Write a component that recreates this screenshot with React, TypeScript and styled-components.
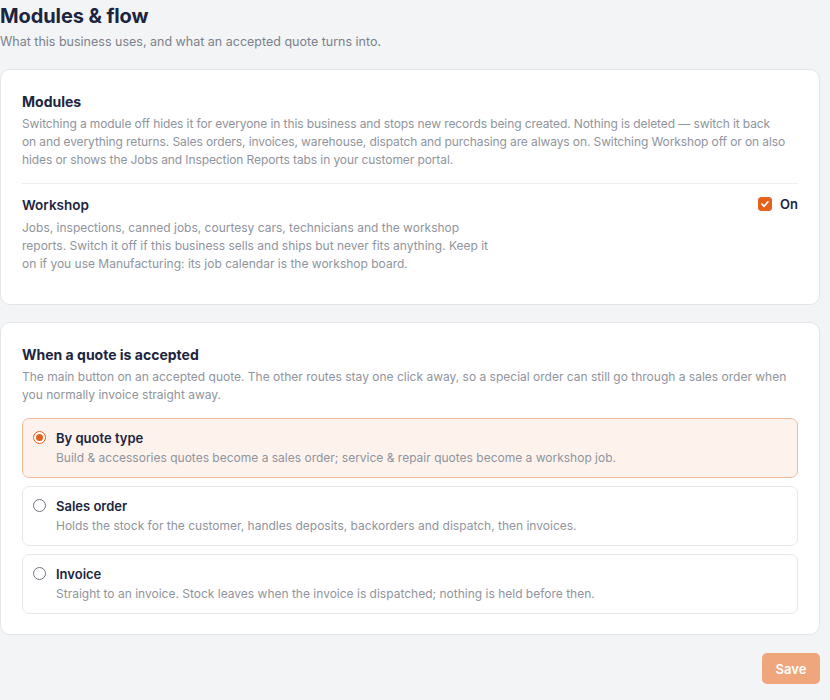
import styled, { createGlobalStyle } from 'styled-components';
import { useState } from 'react';

const GlobalStyle = createGlobalStyle`
  html, body {
    margin: 0;
    padding: 0;
    background: #f3f4f6;
  }
  body {
    font-family: Inter, "Noto Sans", sans-serif;
    color: #1b2540;
  }
  * { box-sizing: border-box; }
`;

const Page = styled.div`
  width: 820px;
  padding-bottom: 17px;
`;

const Title = styled.h1`
  margin: 0;
  padding-top: 3px;
  font-size: 20px;
  line-height: 26px;
  font-weight: 700;
  color: #1b2540;
  letter-spacing: -0.1px;
`;

const Subtitle = styled.p`
  margin: 4px 0 0;
  font-size: 12.5px;
  line-height: 18px;
  color: #7c818b;
`;

const Card = styled.section<{ $top: number }>`
  margin-top: ${(p) => p.$top}px;
  background: #ffffff;
  border: 1px solid #e3e5e9;
  border-radius: 10px;
  padding: 22px 21px 20px;
`;

const SectionTitle = styled.h2`
  margin: 0;
  font-size: 14px;
  line-height: 20px;
  font-weight: 700;
  color: #1b2540;
`;

const Muted = styled.p<{ $max?: number; $gap?: number; $tight?: boolean }>`
  margin: ${(p) => p.$gap ?? 3}px 0 0;
  font-size: 12px;
  line-height: 18px;
  letter-spacing: ${(p) => (p.$tight ? '-0.1px' : '0')};
  color: #8f949d;
  max-width: ${(p) => (p.$max ? `${p.$max}px` : 'none')};
`;

const Divider = styled.hr`
  border: 0;
  border-top: 1px solid #eceef1;
  margin: 14px 0 11px;
`;

const ModuleRow = styled.div`
  display: flex;
  justify-content: space-between;
  align-items: flex-start;
  padding-bottom: 11px;
`;

const ModuleName = styled.div`
  font-size: 13.5px;
  line-height: 20px;
  font-weight: 600;
  color: #1b2540;
`;

const Toggle = styled.label`
  display: flex;
  align-items: center;
  gap: 8px;
  margin-top: 1px;
  font-size: 13px;
  font-weight: 600;
  color: #1b2540;
  cursor: pointer;
`;

const Check = styled.span<{ $on: boolean }>`
  width: 14px;
  height: 14px;
  border-radius: 3px;
  background: ${(p) => (p.$on ? '#e3621d' : '#fff')};
  border: 1px solid ${(p) => (p.$on ? '#e3621d' : '#9aa0a8')};
  display: flex;
  align-items: center;
  justify-content: center;
`;

const Options = styled.div`
  display: flex;
  flex-direction: column;
  gap: 8px;
  margin-top: 14px;
`;

const Option = styled.label<{ $active: boolean }>`
  display: flex;
  gap: 10px;
  padding: 10px;
  border-radius: 7px;
  border: 1px solid ${(p) => (p.$active ? '#f2bc9c' : '#e6e8eb')};
  background: ${(p) => (p.$active ? '#fdf2ec' : '#ffffff')};
  cursor: pointer;
`;

const Radio = styled.span<{ $on: boolean }>`
  flex: none;
  width: 13px;
  height: 13px;
  margin-top: 2px;
  border-radius: 50%;
  border: 1px solid ${(p) => (p.$on ? '#e3621d' : '#707680')};
  background: #fff;
  display: flex;
  align-items: center;
  justify-content: center;
  &::after {
    content: '';
    width: 7px;
    height: 7px;
    border-radius: 50%;
    background: ${(p) => (p.$on ? '#e3621d' : 'transparent')};
  }
`;

const OptionText = styled.div`
  display: flex;
  flex-direction: column;
`;

const OptionTitle = styled.div`
  font-size: 13px;
  line-height: 18px;
  font-weight: 600;
  color: #1b2540;
`;

const OptionDesc = styled.div`
  margin-top: 2px;
  font-size: 12px;
  line-height: 18px;
  color: #8f949d;
`;

const Footer = styled.div`
  display: flex;
  justify-content: flex-end;
  margin-top: 18px;
`;

const SaveButton = styled.button`
  font-family: inherit;
  font-size: 13px;
  font-weight: 600;
  color: #fff;
  background: #f0a67c;
  border: 0;
  border-radius: 5px;
  width: 58px;
  height: 31px;
  cursor: not-allowed;
`;

const routes = [
  {
    key: 'type',
    title: 'By quote type',
    desc: 'Build & accessories quotes become a sales order; service & repair quotes become a workshop job.',
  },
  {
    key: 'sales',
    title: 'Sales order',
    desc: 'Holds the stock for the customer, handles deposits, backorders and dispatch, then invoices.',
  },
  {
    key: 'invoice',
    title: 'Invoice',
    desc: 'Straight to an invoice. Stock leaves when the invoice is dispatched; nothing is held before then.',
  },
];

export default function App() {
  const [workshop, setWorkshop] = useState(true);
  const [route, setRoute] = useState('type');

  return (
    <Page>
      <GlobalStyle />
      <Title>Modules &amp; flow</Title>
      <Subtitle>What this business uses, and what an accepted quote turns into.</Subtitle>

      <Card $top={18}>
        <SectionTitle>Modules</SectionTitle>
        <Muted $tight>
          Switching a module off hides it for everyone in this business and stops new records being
          created. Nothing is deleted — switch it back
          <br />
          on and everything returns. Sales orders, invoices, warehouse, dispatch and purchasing are
          always on. Switching Workshop off or on also hides or shows the Jobs and Inspection
          Reports tabs in your customer portal.
        </Muted>
        <Divider />
        <ModuleRow>
          <div>
            <ModuleName>Workshop</ModuleName>
            <Muted $max={470} $gap={4}>
              Jobs, inspections, canned jobs, courtesy cars, technicians and the workshop reports.
              Switch it off if this business sells and ships but never fits anything. Keep it on if
              you use Manufacturing: its job calendar is the workshop board.
            </Muted>
          </div>
          <Toggle onClick={() => setWorkshop(!workshop)}>
            <Check $on={workshop}>
              {workshop && (
                <svg width="10" height="10" viewBox="0 0 10 10">
                  <path d="M2 5.2 4.1 7.3 8 2.8" fill="none" stroke="#fff" strokeWidth="1.7" strokeLinecap="round" strokeLinejoin="round" />
                </svg>
              )}
            </Check>
            On
          </Toggle>
        </ModuleRow>
      </Card>

      <Card $top={17}>
        <SectionTitle>When a quote is accepted</SectionTitle>
        <Muted>
          The main button on an accepted quote. The other routes stay one click away, so a special
          order can still go through a sales order when you normally invoice straight away.
        </Muted>
        <Options>
          {routes.map((r) => (
            <Option key={r.key} $active={route === r.key} onClick={() => setRoute(r.key)}>
              <Radio $on={route === r.key} />
              <OptionText>
                <OptionTitle>{r.title}</OptionTitle>
                <OptionDesc>{r.desc}</OptionDesc>
              </OptionText>
            </Option>
          ))}
        </Options>
      </Card>

      <Footer>
        <SaveButton disabled>Save</SaveButton>
      </Footer>
    </Page>
  );
}
